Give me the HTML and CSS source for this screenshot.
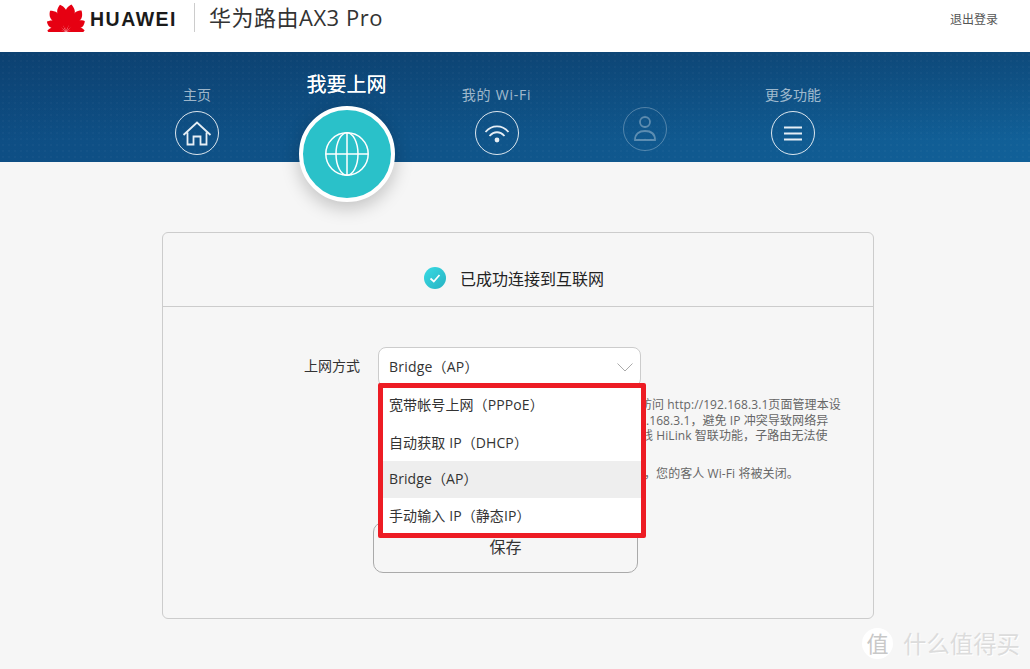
FILE: index.html
```html
<!DOCTYPE html>
<html lang="zh-CN">
<head>
<meta charset="utf-8">
<title>华为路由AX3 Pro</title>
<link rel="stylesheet" href="styles.css">
</head>
<body>
<header class="topbar">
  <div class="brand">
    <svg class="logo" viewBox="0 0 38 28" aria-hidden="true">
      <defs><path id="petal" d="M0 0 C-.8 -7 -5.6 -14 -4.6 -21 C-4.2 -24 -1.6 -26.6 -.3 -27.5 C1 -26.6 4 -24 4.6 -21 C5.6 -14 .8 -7 0 0Z"/></defs>
      <g fill="#e60012">
        <use href="#petal" transform="translate(19 27.5) rotate(-12)"/>
        <use href="#petal" transform="translate(19 27.5) rotate(12)"/>
        <use href="#petal" transform="translate(19 27.5) rotate(-37) scale(.95)"/>
        <use href="#petal" transform="translate(19 27.5) rotate(37) scale(.95)"/>
        <use href="#petal" transform="translate(19 27.5) rotate(-62) scale(.78)"/>
        <use href="#petal" transform="translate(19 27.5) rotate(62) scale(.78)"/>
        <use href="#petal" transform="translate(19 27.5) rotate(-87) scale(.68)"/>
        <use href="#petal" transform="translate(19 27.5) rotate(87) scale(.68)"/>
      </g>
    </svg>
    <span class="wordmark">HUAWEI</span>
    <span class="product">华为路由AX3 Pro</span>
  </div>
  <a class="logout">退出登录</a>
</header>

<nav class="tabs">
  <div class="tab">
    <span class="tab-label">主页</span>
    <span class="tab-ring">
      <svg viewBox="0 0 44 44"><path d="M8.5 24 L22 11.5 L35.5 24 M12.5 21.5 V33.5 H18.5 V25.5 H25.5 V33.5 H31.5 V21.5"/></svg>
    </span>
  </div>
  <div class="tab tab-active">
    <span class="tab-label">我要上网</span>
    <span class="tab-ring">
      <svg viewBox="0 0 44 44"><circle cx="22" cy="22" r="21.2"/><ellipse cx="22" cy="22" rx="11" ry="21.2"/><path d="M22 1 V43 M1 22 H43"/></svg>
    </span>
  </div>
  <div class="tab">
    <span class="tab-label tab-label-latin">我的 Wi-Fi</span>
    <span class="tab-ring">
      <svg viewBox="0 0 44 44"><path d="M10.5 21 C17 13.5 27 13.5 33.5 21 M14.5 25 C19 20 25 20 29.5 25"/><circle class="dot" cx="22" cy="29" r="2.4"/></svg>
    </span>
  </div>
  <div class="tab tab-disabled">
    <span class="tab-ring">
      <svg viewBox="0 0 44 44"><circle cx="22" cy="15" r="5"/><path d="M12 33 C12 27 16 24 22 24 C28 24 32 27 32 33 Z"/></svg>
    </span>
  </div>
  <div class="tab">
    <span class="tab-label">更多功能</span>
    <span class="tab-ring">
      <svg viewBox="0 0 44 44"><path class="bars" d="M13 16.5 H31 M13 22.5 H31 M13 28.5 H31"/></svg>
    </span>
  </div>
</nav>

<main class="page">
  <section class="card">
    <div class="status">
      <svg class="check" viewBox="0 0 22 22" aria-hidden="true">
        <defs><linearGradient id="chk" x1="0" y1="0" x2="1" y2="1"><stop offset="0" stop-color="#38dbe4"/><stop offset="1" stop-color="#27b2c2"/></linearGradient></defs>
        <circle cx="11" cy="11" r="11" fill="url(#chk)"/>
        <path d="M6.5 11.5 L9.8 14.5 L15.5 8" fill="none" stroke="#fff" stroke-width="1.7"/>
      </svg>
      <span class="status-text">已成功连接到互联网</span>
    </div>
    <div class="form">
      <div class="field">
        <span class="field-label">上网方式</span>
        <div class="select-wrap">
          <div class="select">
            <span>Bridge（AP）</span>
            <svg class="chevron" viewBox="0 0 16 9"><path d="M0.5 0.5 L8 8 L15.5 0.5"/></svg>
          </div>
          <ul class="menu">
            <li class="menu-first">宽带帐号上网（PPPoE）</li>
            <li>自动获取 IP（DHCP）</li>
            <li class="menu-current">Bridge（AP）</li>
            <li class="menu-last">手动输入 IP（静态IP）</li>
          </ul>
        </div>
      </div>
      <div class="notes">
        <p class="cut-a">访问 http://192.168.3.1页面管理本设</p>
        <p>.168.3.1，避免 IP 冲突导致网络异</p>
        <p class="cut-b">线 HiLink 智联功能，子路由无法使</p>
        <p class="notes-gap cut-c">，您的客人 Wi-Fi 将被关闭。</p>
      </div>
      <button class="save">保存</button>
    </div>
  </section>
</main>

<div class="watermark">
  <span class="wm-badge">值</span>
  <span class="wm-text">什么值得买</span>
</div>
</body>
</html>
```
FILE: styles.css
```css
* { box-sizing: border-box; }
html, body { margin: 0; padding: 0; }
body {
  width: 1030px;
  height: 669px;
  overflow: hidden;
  position: relative;
  background: #f6f6f6;
  color: #333;
  font-family: "Open Sans", "Noto Sans CJK SC", sans-serif;
}

/* top bar */
.topbar {
  height: 52px;
  background: #fff;
  display: flex;
  justify-content: space-between;
  padding: 0 32px 0 47px;
}
.brand { display: flex; align-items: flex-start; }
.logo { width: 38px; height: 28px; margin-top: 4px; display: block; }
.wordmark {
  margin-left: 5px;
  margin-top: 7px;
  font: 700 19.5px/24px "Liberation Sans", sans-serif;
  letter-spacing: 1.5px;
  color: #1a1a1a;
}
.product {
  margin-left: 17px;
  padding-left: 14px;
  height: 29px;
  margin-top: 3px;
  border-left: 1px solid #ccc;
  font-size: 22px;
  line-height: 28px;
  letter-spacing: .5px;
  color: #333;
}
.logout { font-size: 12px; line-height: 39px; color: #555; }

/* navigation band */
.tabs {
  height: 110px;
  padding-left: 122px;
  display: grid;
  grid-template-columns: 150px 149px 151px 146px 150px;
  justify-content: start;
  background-color: #0f4e82;
  background-image:
    radial-gradient(rgba(255,255,255,.022) 1px, transparent 1.2px),
    linear-gradient(180deg, rgba(11,52,94,.5) 0%, rgba(11,52,94,0) 80%),
    linear-gradient(100deg, #0e4e84 0%, #0f5388 40%, #116098 100%);
  background-size: 6px 6px, 100% 100%, 100% 100%;
}
.tab {
  display: flex;
  flex-direction: column;
  align-items: center;
  padding-top: 34px;
  gap: 7px;
}
.tab-label {
  font-size: 14px;
  line-height: 18px;
  color: rgba(255,255,255,.62);
  white-space: nowrap;
}
.tab-label-latin { letter-spacing: .75px; }
.tab-ring {
  width: 44px;
  height: 44px;
  flex: none;
  border: 1.5px solid rgba(255,255,255,.85);
  border-radius: 50%;
  display: flex;
  align-items: center;
  justify-content: center;
}
.tab-ring svg {
  width: 44px;
  height: 44px;
  flex: none;
  fill: none;
  stroke: #e6eef5;
  stroke-width: 1.8;
}
.tab-ring .dot { fill: #e6eef5; stroke: none; }
.tab-ring .bars { stroke-width: 2; }

.tab-active { padding-top: 21px; gap: 9px; }
.tab-active .tab-label {
  font-size: 20px;
  line-height: 24px;
  color: #fff;
  text-shadow: 0 0 .6px #fff;
}
.tab-active .tab-ring {
  width: 96px;
  height: 96px;
  background: #2ac1c9;
  border: 4px solid #fff;
  box-shadow: 0 6px 18px rgba(0,0,0,.22);
}
.tab-active .tab-ring svg { stroke: #fff; stroke-width: 1.5; }

.tab-disabled { padding-top: 55px; }
.tab-disabled .tab-ring { border-color: rgba(255,255,255,.28); }
.tab-disabled .tab-ring svg { stroke: rgba(255,255,255,.32); }

/* card */
.page { padding: 70px 156px 0 162px; }
.card {
  height: 387px;
  border: 1px solid #ccc;
  border-radius: 6px;
}
.status {
  height: 74px;
  border-bottom: 1px solid #ccc;
  padding: 34px 0 0 261px;
  display: flex;
  align-items: flex-start;
}
.check { width: 22px; height: 22px; display: block; }
.status-text {
  margin-left: 14px;
  font-size: 16px;
  line-height: 24px;
  color: #222;
}

/* form */
.form { padding: 40px 0 0 141px; }
.field { display: flex; align-items: flex-start; }
.field-label {
  width: 74px;
  font-size: 14px;
  line-height: 38px;
  color: #333;
}
.select-wrap { position: relative; }
.select {
  width: 263px;
  height: 40px;
  background: #fff;
  border: 1px solid #ccc;
  border-radius: 8px;
  padding: 0 7px 2px 10px;
  font-size: 14px;
  letter-spacing: .2px;
  color: #333;
  display: flex;
  justify-content: space-between;
  align-items: center;
}
.chevron { width: 16px; height: 9px; fill: none; stroke: #aaa; stroke-width: 1; margin-top: 3px; }

.menu {
  position: absolute;
  left: 0;
  top: 36px;
  width: 268px;
  height: 155px;
  margin: 0;
  padding: 0;
  list-style: none;
  background: #fff;
  border: 5px solid #ed1c24;
  border-radius: 2px;
  font-size: 14px;
  letter-spacing: .1px;
  color: #333;
  overflow: hidden;
}
.menu li { height: 37px; line-height: 37px; padding-left: 6px; white-space: nowrap; }
.menu .menu-first { height: 36px; line-height: 33px; }
.menu .menu-current, .menu .menu-last { line-height: 36px; }
.menu .menu-current { background: #eee; }

.notes {
  margin: 10px 0 0 342px;
  font-size: 12px;
  line-height: 15.5px;
  letter-spacing: .08px;
  color: #666;
  white-space: nowrap;
}
.notes p { margin: 0; }
.notes .cut-a { text-indent: -6px; }
.notes .cut-b { text-indent: -5px; }
.notes .cut-c { text-indent: -2px; }
.notes .notes-gap { margin-top: 22.5px; }

.save {
  display: block;
  width: 265px;
  height: 51px;
  margin: 40px 0 0 69px;
  padding: 0 0 2px;
  background: #f6f6f6;
  border: 1px solid #aaa;
  border-radius: 10px;
  font: inherit;
  font-size: 16px;
  color: #333;
}

/* watermark */
.watermark {
  position: absolute;
  left: 862px;
  top: 628px;
  display: flex;
  align-items: center;
  gap: 10px;
  color: #dcdcdc;
}
.wm-badge {
  width: 31px;
  height: 31px;
  border-radius: 50%;
  background: #fff;
  color: #c8c8c8;
  font-size: 22px;
  line-height: 30px;
  text-align: center;
}
.wm-text {
  font-size: 23.4px;
  line-height: 30px;
  white-space: nowrap;
  text-shadow: 1px 1px 0 #fff;
}
```
